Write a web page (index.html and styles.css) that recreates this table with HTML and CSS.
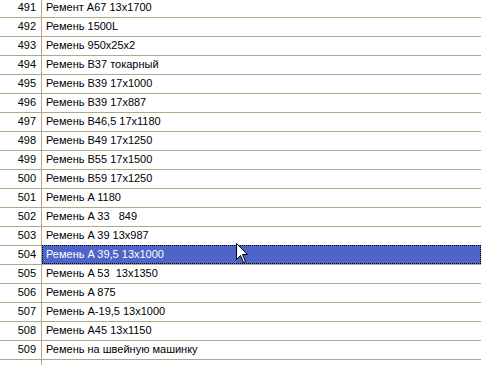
FILE: index.html
```html
<!DOCTYPE html>
<html>
<head>
<meta charset="utf-8">
<link rel="stylesheet" href="styles.css">
</head>
<body>
<div class="grid">
  <div class="row"><div class="num">491</div><div class="name">Ремент A67 13x1700</div></div>
  <div class="row"><div class="num">492</div><div class="name">Ремень 1500L</div></div>
  <div class="row"><div class="num">493</div><div class="name">Ремень 950x25x2</div></div>
  <div class="row"><div class="num">494</div><div class="name">Ремень B37 токарный</div></div>
  <div class="row"><div class="num">495</div><div class="name">Ремень B39 17x1000</div></div>
  <div class="row"><div class="num">496</div><div class="name">Ремень B39 17x887</div></div>
  <div class="row"><div class="num">497</div><div class="name">Ремень B46,5 17x1180</div></div>
  <div class="row"><div class="num">498</div><div class="name">Ремень B49 17x1250</div></div>
  <div class="row"><div class="num">499</div><div class="name">Ремень B55 17x1500</div></div>
  <div class="row"><div class="num">500</div><div class="name">Ремень B59 17x1250</div></div>
  <div class="row"><div class="num">501</div><div class="name">Ремень A 1180</div></div>
  <div class="row"><div class="num">502</div><div class="name">Ремень A 33&nbsp;&nbsp;&nbsp;849</div></div>
  <div class="row"><div class="num">503</div><div class="name">Ремень A 39 13x987</div></div>
  <div class="row selected"><div class="num">504</div><div class="name">Ремень A 39,5 13x1000</div></div>
  <div class="row"><div class="num">505</div><div class="name">Ремень A 53&nbsp;&nbsp;13x1350</div></div>
  <div class="row"><div class="num">506</div><div class="name">Ремень A 875</div></div>
  <div class="row"><div class="num">507</div><div class="name">Ремень A-19,5 13x1000</div></div>
  <div class="row"><div class="num">508</div><div class="name">Ремень A45 13x1150</div></div>
  <div class="row"><div class="num">509</div><div class="name">Ремень на швейную машинку</div></div>
  <div class="row empty"><div class="num"></div><div class="name"></div></div>
</div>
<svg class="cursor" width="14" height="22" viewBox="0 0 14 22">
  <path d="M1.5 1.5 L1.5 17.5 L5.5 13.5 L8.5 20.5 L10.5 19.5 L7.5 12.5 L12.5 12.5 Z" fill="#fff" stroke="#000" stroke-width="1"/>
</svg>
</body>
</html>
```

FILE: styles.css
```css
html, body {
  margin: 0;
  padding: 0;
  background: #fff;
  overflow: hidden;
  width: 481px;
  height: 365px;
}
body {
  font-family: "Liberation Sans", Arial, sans-serif;
  font-size: 11px;
  color: #000;
  position: relative;
}
.grid {
  margin-top: -1px;
  display: flex;
  flex-direction: column;
}
.row {
  display: flex;
  height: 19px;
  box-sizing: border-box;
  border-bottom: 1px solid #b1a888;
}
.num {
  width: 42px;
  box-sizing: border-box;
  border-right: 1px solid #b1a888;
  text-align: right;
  padding-right: 5px;
  line-height: 16px;
}
.name {
  flex: 1;
  padding-left: 4px;
  line-height: 16px;
  white-space: pre;
}
.selected .name {
  background: #4f64c8;
  color: #fff;
  outline: 1px dotted #000;
  outline-offset: -1px;
  margin-top: -1px;
  height: 19px;
  line-height: 18px;
}
.empty { border-bottom: none; }
.cursor {
  position: absolute;
  left: 235px;
  top: 242px;
}
```
